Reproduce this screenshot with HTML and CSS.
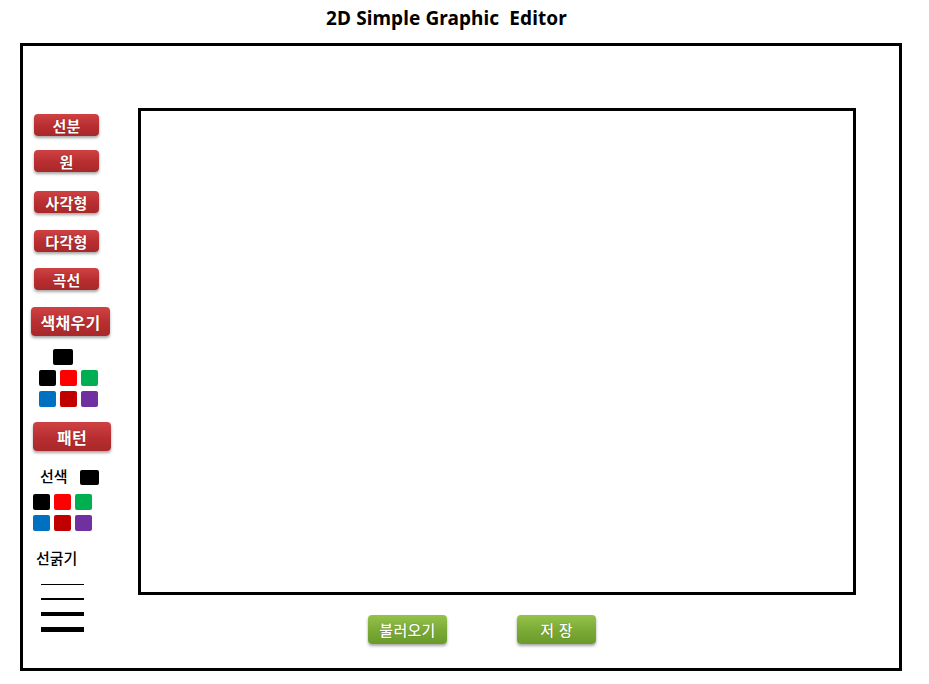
FILE: index.html
```html
<!DOCTYPE html>
<html lang="ko">
<head>
<meta charset="utf-8">
<title>2D Simple Graphic Editor</title>
<link rel="stylesheet" href="styles.css">
</head>
<body>
<h1 class="title">2D Simple Graphic&nbsp; Editor</h1>
<div class="frame">
  <aside class="sidebar">
    <button class="btn red b1">선분</button>
    <button class="btn red b2">원</button>
    <button class="btn red b3">사각형</button>
    <button class="btn red b4">다각형</button>
    <button class="btn red b5">곡선</button>
    <button class="btn red wide fill">색채우기</button>
    <div class="swatch current"></div>
    <div class="grid grid1">
      <span class="c sw-black"></span><span class="c sw-red"></span><span class="c sw-green"></span>
      <span class="c sw-blue"></span><span class="c sw-dred"></span><span class="c sw-purple"></span>
    </div>
    <button class="btn red wide pattern">패턴</button>
    <div class="linecolor"><span class="label">선색</span><span class="swatch small"></span></div>
    <div class="grid grid2">
      <span class="c sw-black"></span><span class="c sw-red"></span><span class="c sw-green"></span>
      <span class="c sw-blue"></span><span class="c sw-dred"></span><span class="c sw-purple"></span>
    </div>
    <div class="label thick">선굵기</div>
    <div class="line l1"></div>
    <div class="line l2"></div>
    <div class="line l3"></div>
    <div class="line l4"></div>
  </aside>
  <main class="main">
    <div class="canvas"></div>
    <div class="actions">
      <button class="btn green">불러오기</button>
      <button class="btn green">저 장</button>
    </div>
  </main>
</div>
</body>
</html>
```
FILE: styles.css
```css
html, body {
  margin: 0;
  padding: 0;
  background: #fff;
}
body {
  font-family: "Noto Sans CJK KR", "Noto Sans", sans-serif;
  color: #000;
  width: 929px;
  height: 684px;
  overflow: hidden;
}
.title {
  margin: 0;
  height: 43px;
  box-sizing: border-box;
  padding-top: 4px;
  padding-right: 36px;
  font-family: "Noto Sans", "Noto Sans CJK KR", sans-serif;
  font-size: 19px;
  line-height: 28px;
  font-weight: 700;
  text-align: center;
  letter-spacing: 0.1px;
}
.frame {
  margin-left: 20px;
  width: 882px;
  height: 628px;
  border: 3px solid #000;
  box-sizing: border-box;
  display: flex;
}
.sidebar {
  width: 115px;
  flex: none;
  display: flex;
  flex-direction: column;
  align-items: flex-start;
  padding-top: 68px;
  box-sizing: border-box;
}
.btn {
  border: none;
  padding: 0;
  margin: 0;
  color: #fff;
  font-family: "Noto Sans CJK KR", sans-serif;
  font-weight: 700;
  font-size: 15px;
  border-radius: 4px;
  text-shadow: 0 0 1px rgba(80, 0, 0, 0.6);
  box-shadow: 0 2px 3px rgba(0, 0, 0, 0.35);
  display: flex;
  align-items: center;
  justify-content: center;
  letter-spacing: 0.3px;
}
.red {
  background: linear-gradient(#cf4244, #b82e30 55%, #a8282a);
  width: 65px;
  height: 22px;
  margin-left: 11px;
}
.b2 { margin-top: 14px; }
.b3 { margin-top: 19px; }
.b4 { margin-top: 17px; }
.b5 { margin-top: 16px; }
.red.wide {
  height: 29px;
  font-size: 16px;
}
.fill {
  width: 79px;
  margin-left: 8px;
  margin-top: 17px;
}
.pattern {
  width: 78px;
  margin-left: 10px;
  margin-top: 15px;
  height: 28px;
}
.swatch {
  background: #000;
  border-radius: 2px;
}
.swatch.current {
  width: 20px;
  height: 16px;
  margin-left: 30px;
  margin-top: 13px;
}
.grid {
  display: grid;
  grid-template-columns: repeat(3, 17px);
  grid-auto-rows: 16px;
  column-gap: 4px;
  row-gap: 5px;
}
.grid1 {
  margin-left: 16px;
  margin-top: 5px;
}
.grid2 {
  margin-left: 10px;
  margin-top: 8px;
}
.c { display: block; border-radius: 2px; }
.sw-black { background: #000; }
.sw-red { background: #ff0000; }
.sw-green { background: #00b050; }
.sw-blue { background: #0070c0; }
.sw-dred { background: #c00000; }
.sw-purple { background: #7030a0; }
.linecolor {
  display: flex;
  align-items: flex-start;
  margin-left: 17px;
  margin-top: 15px;
  height: 20px;
}
.label {
  font-size: 15px;
  line-height: 20px;
  font-weight: 500;
}
.swatch.small {
  width: 19px;
  height: 15px;
  margin-left: 12px;
  margin-top: 4px;
}
.thick {
  margin-left: 13px;
  margin-top: 17px;
  font-size: 15px;
}
.line {
  width: 43px;
  background: #000;
  margin-left: 18px;
}
.l1 { height: 1px; margin-top: 16px; }
.l2 { height: 2px; margin-top: 13px; }
.l3 { height: 4px; margin-top: 12px; }
.l4 { height: 5px; margin-top: 11px; }
.main {
  flex: 1;
  padding-top: 62px;
  display: flex;
  flex-direction: column;
}
.canvas {
  width: 718px;
  height: 487px;
  border: 3px solid #000;
  box-sizing: border-box;
}
.actions {
  display: flex;
  gap: 70px;
  padding-left: 230px;
  margin-top: 20px;
}
.green {
  background: linear-gradient(#95c24a, #7aa935 55%, #6a9a2a);
  width: 79px;
  height: 29px;
  text-shadow: 0 0 1px rgba(30, 60, 0, 0.6);
  font-weight: 500;
}
```
